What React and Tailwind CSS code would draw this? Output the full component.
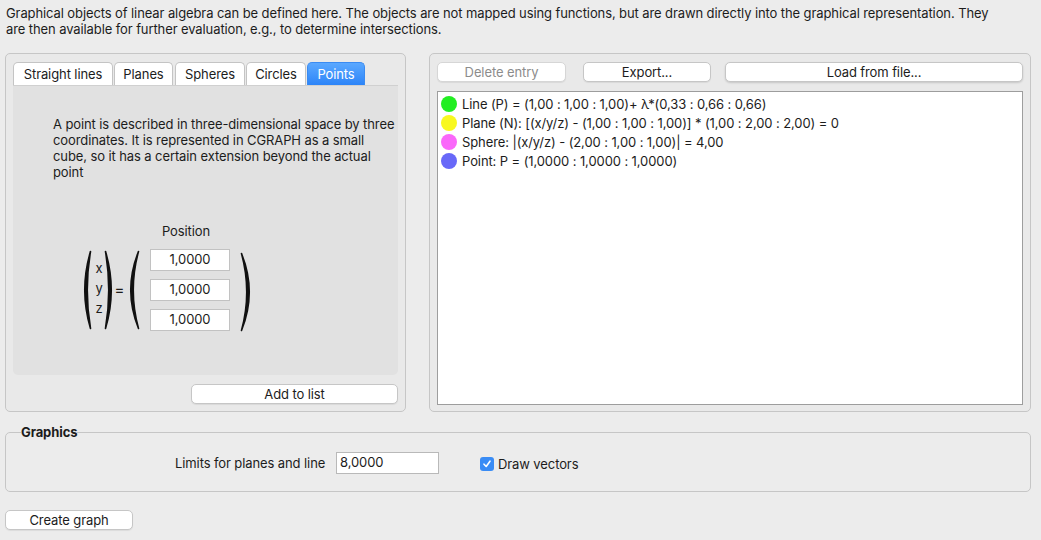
import React from "react";

const Paren = ({ w, right }) => {
  const a = w - 1.5;
  const d = right
    ? `M1.5 1.5 Q${w + 4} 40 1.5 78.5 Q${w - 1} 40 1.5 1.5Z`
    : `M${a} 1.5 Q-4 40 ${a} 78.5 Q1 40 ${a} 1.5Z`;
  return (
    <svg width={w} height="80" viewBox={`0 0 ${w} 80`} className="shrink-0">
      <path d={d} fill="#111" stroke="#111" strokeWidth="1.6" strokeLinejoin="round" />
    </svg>
  );
};

const Btn = ({ className = "", disabled, children }) => (
  <button
    className={`h-[20px] rounded-[5px] border bg-white text-[13px] leading-[18px] shadow-[0_1px_1px_rgba(0,0,0,0.07)] ${
      disabled ? "border-[#d6d6d6] bg-[#f3f3f3] text-[#8c8c8c]" : "border-[#c6c6c6] text-[#1c1c1c]"
    } ${className}`}
  >
    {children}
  </button>
);

const tabs = ["Straight lines", "Planes", "Spheres", "Circles", "Points"];
const tabW = ["w-[100px]", "w-[59px]", "w-[70px]", "w-[60px]", "w-[58px]"];

const entries = [
  { color: "bg-[#22ee22]", text: "Line (P) = (1,00 : 1,00 : 1,00)+ λ*(0,33 : 0,66 : 0,66)" },
  { color: "bg-[#f8f820]", text: "Plane (N): [(x/y/z) - (1,00 : 1,00 : 1,00)] * (1,00 : 2,00 : 2,00) = 0" },
  { color: "bg-[#fa68fa]", text: "Sphere: |(x/y/z) - (2,00 : 1,00 : 1,00)| = 4,00" },
  { color: "bg-[#6868f8]", text: "Point: P = (1,0000 : 1,0000 : 1,0000)" },
];

export default function App() {
  return (
    <div className="w-[1041px] h-[540px] overflow-hidden bg-[#ececec] text-[13px] tracking-[-0.1px] text-[#1c1c1c] font-['Inter','Liberation_Sans',Arial,sans-serif]">
      <p className="whitespace-nowrap px-[6px] pt-[5px] leading-[16px]">
        Graphical objects of linear algebra can be defined here. The objects are not mapped using functions, but are drawn directly into the graphical representation. They
        <br />
        are then available for further evaluation, e.g., to determine intersections.
      </p>

      <div className="mt-[16px] flex gap-[23px] px-[5px]">
        {/* left group */}
        <div className="w-[401px] h-[359px] rounded-[5px] border border-[#c6c6c6] bg-[#e9e9e9] px-[7px] pt-[8px]">
          <div className="flex h-[23px] gap-[1px]">
            {tabs.map((t, i) => (
              <div
                key={t}
                className={`${tabW[i]} flex items-center justify-center rounded-t-[5px] border border-b-0 leading-[16px] ${
                  t === "Points"
                    ? "border-[#3a8bf2] bg-gradient-to-b from-[#5aa8ff] to-[#2c84f8] text-white"
                    : "border-[#c4c4c4] bg-white"
                } ${i === 2 ? "ml-[1px]" : ""}`}
              >
                {t}
              </div>
            ))}
          </div>
          <div className="h-[290px] rounded-b-[5px] border-t border-[#d0d0d0] bg-[#e1e1e1]">
            <p className="whitespace-nowrap pl-[40px] pt-[30px] leading-[16px]">
              A point is described in three-dimensional space by three
              <br />
              coordinates. It is represented in CGRAPH as a small
              <br />
              cube, so it has a certain extension beyond the actual
              <br />
              point
            </p>
            <div className="mt-[43px] ml-[133px] w-[80px] text-center leading-[16px]">Position</div>
            <div className="mt-[9px] ml-[70px] flex items-center">
              <Paren w={9} />
              <div className="ml-[2px] mb-[4px] flex w-[10px] flex-col items-center leading-[20px]">
                <span>x</span>
                <span>y</span>
                <span>z</span>
              </div>
              <Paren w={9} right />
              <span className="ml-[1px] w-[11px] text-center text-[15px]">=</span>
              <div className="ml-[2px]">
                <Paren w={13} />
              </div>
              <div className="ml-[10px] flex flex-col gap-[8px]">
                {[0, 1, 2].map((k) => (
                  <div
                    key={k}
                    className="flex h-[22px] w-[80px] items-center justify-center border border-[#c2c2c2] bg-white"
                  >
                    1,0000
                  </div>
                ))}
              </div>
              <div className="ml-[10px] mt-[4px]">
                <Paren w={13} right />
              </div>
            </div>
          </div>
          <div className="mt-[9px] flex justify-end">
            <Btn className="w-[207px]">Add to list</Btn>
          </div>
        </div>

        {/* right group */}
        <div className="w-[602px] h-[359px] rounded-[5px] border border-[#c6c6c6] bg-[#e9e9e9] px-[7px] pt-[8px]">
          <div className="flex">
            <Btn disabled className="w-[129px]">
              Delete entry
            </Btn>
            <Btn className="ml-[17px] w-[128px]">Export...</Btn>
            <Btn className="ml-[14px] w-[298px] border-[#bcc3cc] shadow-[0_1px_2px_rgba(0,0,0,0.15)]">
              Load from file...
            </Btn>
          </div>
          <div className="mt-[9px] h-[314px] border border-[#9d9d9d] bg-white pl-[3px] pt-[2px]">
            {entries.map((e) => (
              <div key={e.text} className="flex h-[19px] items-center">
                <span className={`h-[16px] w-[16px] shrink-0 rounded-full ${e.color}`} />
                <span className="ml-[5px] whitespace-nowrap leading-[16px]">{e.text}</span>
              </div>
            ))}
          </div>
        </div>
      </div>

      <fieldset className="mx-[5px] mt-[12px] w-[1026px] rounded-[5px] border border-[#c6c6c6] px-0 pb-[17px] pt-[12px]">
        <legend className="ml-[15px] px-0 font-bold leading-[16px]">Graphics</legend>
        <div className="flex h-[22px] items-center pl-[169px]">
          <span className="w-[161px] whitespace-nowrap leading-[16px]">Limits for planes and line</span>
          <div className="flex h-[22px] w-[103px] items-center border border-[#b9b9b9] bg-white pl-[3px]">
            8,0000
          </div>
          <span className="ml-[41px] mt-[2px] flex h-[14px] w-[14px] items-center justify-center rounded-[3px] bg-[#3a8cf5]">
            <svg width="10" height="10" viewBox="0 0 10 10">
              <path d="M2 5.2 L4.2 7.5 L8 2.2" fill="none" stroke="white" strokeWidth="1.6" strokeLinecap="round" strokeLinejoin="round" />
            </svg>
          </span>
          <span className="ml-[4px] mt-[2px] leading-[16px]">Draw vectors</span>
        </div>
      </fieldset>

      <Btn className="ml-[5px] mt-[18px] w-[128px]">Create graph</Btn>
    </div>
  );
}
